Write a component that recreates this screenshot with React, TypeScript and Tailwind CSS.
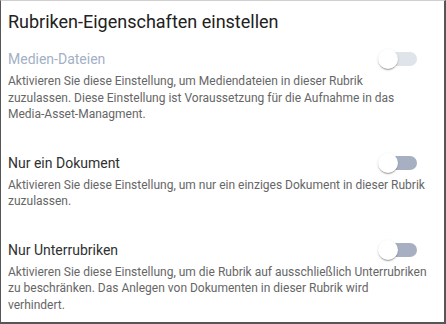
import React from "react";

function Toggle({ disabled }: { disabled?: boolean }) {
  return (
    <div className="relative w-[40px] h-[20px] mr-[26px] flex items-center">
      <div
        className={
          "absolute left-[5px] w-[34px] h-[14px] rounded-full " +
          (disabled ? "bg-[#dfe3ea]" : "bg-[#a7b0c2]")
        }
      />
      <div className="absolute left-0 top-0 w-[20px] h-[20px] rounded-full bg-white shadow-[0_2px_1px_-1px_rgba(0,0,0,0.2),0_1px_1px_0_rgba(0,0,0,0.14),0_1px_3px_0_rgba(0,0,0,0.12)]" />
    </div>
  );
}

function Section({
  label,
  lines,
  disabled,
}: {
  label: string;
  lines: string[];
  disabled?: boolean;
}) {
  return (
    <div className="mb-[28px]">
      <div className="flex items-center justify-between">
        <div
          className={
            "text-[14px] leading-[24px] " +
            (disabled ? "text-[#a3b0c5]" : "text-[#303030]")
          }
        >
          {label}
        </div>
        <Toggle disabled={disabled} />
      </div>
      <div className="mt-[2px] text-[12px] leading-[16.5px] text-[#666666] whitespace-nowrap">
        {lines.map((l, i) => (
          <div key={i}>{l}</div>
        ))}
      </div>
    </div>
  );
}

export default function App() {
  return (
    <div
      className="w-[446px] h-[324px] bg-white border-l border-t border-r-2 border-b-2 border-[#565656] border-t-[#d0d0d0] pl-[7px] overflow-hidden"
      style={{ fontFamily: "Roboto, 'Liberation Sans', sans-serif" }}
    >
      <div className="pt-[9px] text-[18px] leading-[24px] text-[#212121] mb-[13px]">
        Rubriken-Eigenschaften einstellen
      </div>
      <Section
        disabled
        label="Medien-Dateien"
        lines={[
          "Aktivieren Sie diese Einstellung, um Mediendateien in dieser Rubrik",
          "zuzulassen. Diese Einstellung ist Voraussetzung für die Aufnahme in das",
          "Media-Asset-Managment.",
        ]}
      />
      <Section
        label="Nur ein Dokument"
        lines={[
          "Aktivieren Sie diese Einstellung, um nur ein einziges Dokument in dieser Rubrik",
          "zuzulassen.",
        ]}
      />
      <Section
        label="Nur Unterrubriken"
        lines={[
          "Aktivieren Sie diese Einstellung, um die Rubrik auf ausschließlich Unterrubriken",
          "zu beschränken. Das Anlegen von Dokumenten in dieser Rubrik wird",
          "verhindert.",
        ]}
      />
    </div>
  );
}
